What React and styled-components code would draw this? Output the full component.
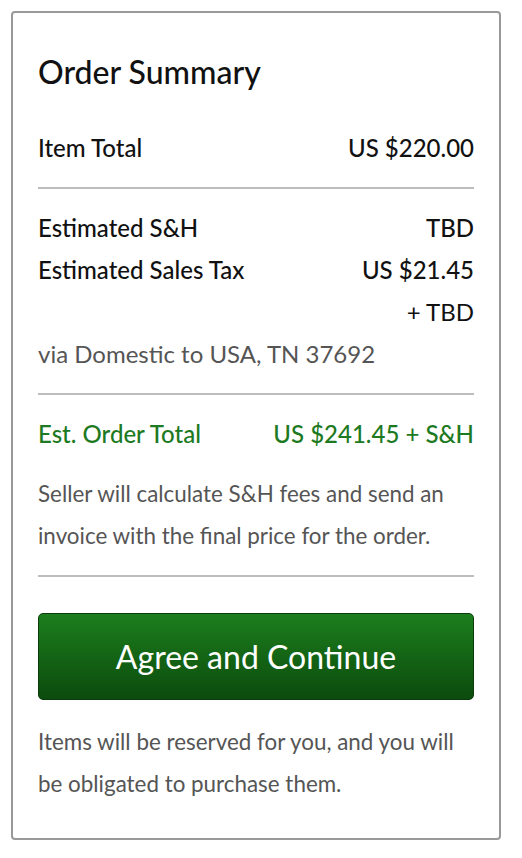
import styled, { createGlobalStyle } from 'styled-components';

const GlobalStyle = createGlobalStyle`
body {
  margin: 0;
  background: #ffffff;
  font-family: Lato, "Liberation Sans", sans-serif;
}
`

function Row({label, value, green}) {
  return (
    <RowWrapper green={green}>
      <span>{label}</span>
      <span>{value}</span>
    </RowWrapper>
  );
}

function App() {
  return (
    <>
      <GlobalStyle />
      <CardWrapper>
        <Title>Order Summary</Title>
        <Section>
          <Row label="Item Total" value="US $220.00" />
        </Section>
        <Divider />
        <Section>
          <Row label="Estimated S&H" value="TBD" />
          <Row label="Estimated Sales Tax" value="US $21.45" />
          <RightLine>+ TBD</RightLine>
          <Note>via Domestic to USA, TN 37692</Note>
        </Section>
        <Divider />
        <Section>
          <Row green label="Est. Order Total" value="US $241.45 + S&H" />
          <SmallNote spaced>Seller will calculate S&H fees and send an invoice with the final price for the order.</SmallNote>
        </Section>
        <Divider />
        <AgreeButton>Agree and Continue</AgreeButton>
        <SmallNote>Items will be reserved for you, and you will be obligated to purchase them.</SmallNote>
      </CardWrapper>
    </>
  );
}

export default App;

const CardWrapper = styled.div`
margin: 11px 21px 18px 11px;
border: 2px solid #999999;
border-radius: 4px;
padding: 38px 25px 33px 25px;
display: flex;
flex-direction: column;
color: #111111;
`
const Title = styled.div`
font-size: 32px;
line-height: 42px;
font-weight: 500;
margin-bottom: 34px;
`
const Section = styled.div`
display: flex;
flex-direction: column;
`
const RowWrapper = styled.div`
display: flex;
justify-content: space-between;
font-size: 24px;
line-height: 42px;
font-weight: 500;
color: ${props => props.green ? '#1d7a22' : '#111111'};
`
const RightLine = styled.div`
text-align: right;
font-size: 24px;
line-height: 42px;
color: #111111;
`
const Note = styled.div`
font-size: 24px;
line-height: 42px;
color: #555555;
`
const SmallNote = styled.div`
margin-top: ${props => props.spaced ? '18px' : '21px'};
font-size: 22.4px;
line-height: 42px;
color: #555555;
`
const Divider = styled.div`
height: 2px;
background: #bdbdbd;
margin: 18px 0;
`
const AgreeButton = styled.button`
margin-top: 18px;
height: 87px;
border: 1px solid #0a3b0b;
border-radius: 5px;
background: linear-gradient(#1c7e1d, #0c4b0d);
color: #ffffff;
font-family: Lato, "Liberation Sans", sans-serif;
font-size: 32px;
font-weight: 400;
cursor: pointer;
`
